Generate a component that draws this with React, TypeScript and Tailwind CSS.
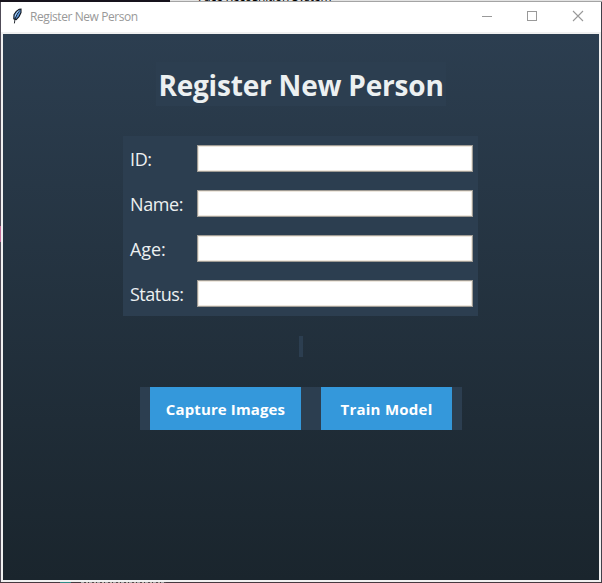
import React from "react";

const FONT = "font-['Open_Sans','Noto_Sans',sans-serif]";

function Feather() {
  return (
    <svg width="10" height="16" viewBox="0 0 10 16" className="block">
      <path d="M1.8 10.8 2 6.8 4.3 3.4 7.2 1.2 9 1.1 9 4.6 7 8.6 4.2 11.6Z" fill="#5d98dc" stroke="#10151d" strokeWidth="1.1" />
      <path d="M7.6 2.5 5 6.5 3 11 2.4 15.4" fill="none" stroke="#10151d" strokeWidth=".9" />
      <path d="M6.8 2.6 4 6 3.2 8.4" fill="none" stroke="#b5d7f7" strokeWidth=".9" />
    </svg>
  );
}

function TitleBar() {
  return (
    <div className="flex h-[30px] items-start bg-white">
      <div className="ml-[11px] mt-[6px] w-[18px]">
        <Feather />
      </div>
      <div className="mt-[7px] w-[430px] text-[12px] leading-4 tracking-[-0.42px] whitespace-nowrap text-[#999]">
        Register New Person
      </div>
      <svg width="114" height="30" viewBox="0 0 114 30" fill="none" stroke="#999" className="ml-[11px]" shapeRendering="crispEdges">
        <path d="M11 14.5h10" />
        <rect x="56.5" y="9.5" width="9" height="9" />
        <path d="m102 9 10 10m0-10-10 10" shapeRendering="auto" strokeWidth="1.1" />
      </svg>
    </div>
  );
}

const fields = [
  { label: "ID:", spacing: "tracking-[-0.4px]" },
  { label: "Name:", spacing: "tracking-[-0.4px]" },
  { label: "Age:", spacing: "tracking-[-0.1px]" },
  { label: "Status:", spacing: "tracking-[-0.5px]" },
];

export default function App() {
  return (
    <div className={`flex h-[583px] w-[602px] flex-col overflow-hidden bg-[#40404a] ${FONT}`}>
      <div className="flex h-px shrink-0">
        <div className="w-[170px] bg-[#17131c]" />
        <div className="flex h-px flex-1 overflow-hidden bg-[#e3e3e3]">
          <span className="-mt-[11px] ml-[28px] text-[12px] leading-4 tracking-[-0.2px] whitespace-nowrap text-black">Face Recognition System</span>
        </div>
      </div>
      <div className="flex h-px shrink-0">
        <div className="w-[170px] bg-[#17131c]" />
        <div className="flex-1 bg-[#a4a4a4]" />
      </div>
      <div className="flex h-[580px] shrink-0">
        <div className="flex w-px shrink-0 flex-col bg-[#504c58]">
          <div className="mt-[224px] h-4 bg-[#c16b96]" />
        </div>
        <div className="flex w-[600px] shrink-0 flex-col bg-[#f0f0f0]">
          <TitleBar />
          <div className="mx-[2px] mt-[2px] flex h-[546px] flex-col items-center bg-linear-to-b from-[#2c3e50] to-[#1a252d]">
            <h1 className="mt-7 flex h-11 w-[290px] items-center justify-center bg-[#2c3e50] pt-[2px] text-[28px] font-bold tracking-[-0.2px] whitespace-nowrap text-[#ecf0f1]">
              Register New Person
            </h1>
            <div className="mt-[30px] mr-px flex h-[180px] w-[355px] flex-col bg-[#2c3e50]">
              {fields.map((f) => (
                <label key={f.label} className="flex h-[45px] items-center pl-[7px]">
                  <span className={`w-[67px] pt-[2px] text-[18px] font-normal whitespace-nowrap text-[#ecf0f1] ${f.spacing}`}>{f.label}</span>
                  <input className="h-[27px] w-[276px] border border-[#9f9b94] bg-white shadow-[inset_0_0_0_1px_#eee8df] outline-none" />
                </label>
              ))}
            </div>
            <div className="mt-5 h-[21px] w-1 bg-[#2c3e50]" />
            <div className="mt-[30px] flex h-[43px] w-[322px] gap-5 bg-[#2c3e50] px-[10px] text-[15px] font-bold whitespace-nowrap text-white">
              <button className="w-[151px] bg-[#3498db] pt-[2px] tracking-[0.13px]">Capture Images</button>
              <button className="w-[131px] bg-[#3498db] pt-[2px] tracking-[0.25px]">Train Model</button>
            </div>
          </div>
        </div>
        <div className="w-px bg-[#40404a]" />
      </div>
      <div className="flex h-px shrink-0 bg-[#45393f]">
        <div className="ml-[60px] h-px w-[11px] bg-[#318a87]" />
        <div className="ml-[10px] h-px w-[85px] bg-[repeating-linear-gradient(90deg,#aaa_0_3px,#55474b_3px_5px,#b9b5aa_5px_7px,#45393f_7px_8px)]" />
      </div>
    </div>
  );
}
